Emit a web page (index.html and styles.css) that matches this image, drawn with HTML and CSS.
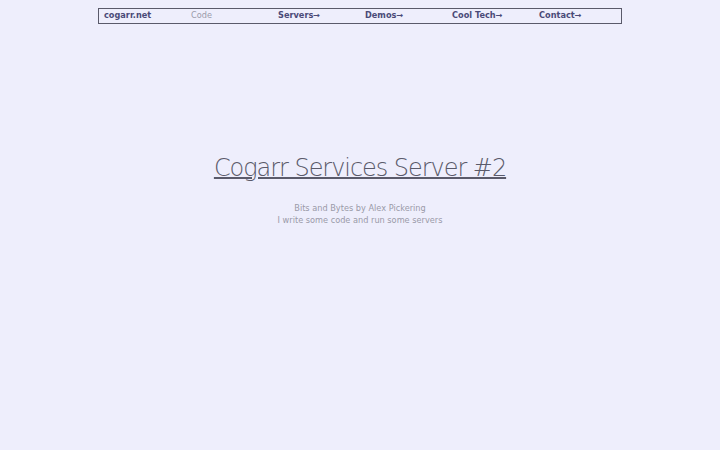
FILE: index.html
```html
<!DOCTYPE html>
<html>
<head>
<meta charset="utf-8">
<title>Cogarr Services Server #2</title>
<link rel="stylesheet" href="styles.css">
</head>
<body>
<nav class="topnav">
  <a class="nav-item nav-home" href="#">cogarr.net</a>
  <a class="nav-item nav-muted" href="#">Code</a>
  <a class="nav-item" href="#">Servers&rarr;</a>
  <a class="nav-item" href="#">Demos&rarr;</a>
  <a class="nav-item" href="#">Cool Tech&rarr;</a>
  <a class="nav-item" href="#">Contact&rarr;</a>
</nav>
<main class="hero">
  <h1 class="hero-title"><a href="#">Cogarr Services Server #2</a></h1>
  <p class="hero-sub">Bits and Bytes by Alex Pickering<br>I write some code and run some servers</p>
</main>
</body>
</html>
```
FILE: styles.css
```css
html, body {
  margin: 0;
  padding: 0;
  background: #eeeefc;
  font-family: "DejaVu Sans", sans-serif;
}

body {
  padding-top: 8px;
}

.topnav {
  width: 522px;
  margin: 0 auto;
  border: 1px solid #5a5a6a;
  display: grid;
  grid-template-columns: repeat(6, 1fr);
  height: 14px;
  align-items: start;
}

.nav-item {
  padding-left: 5px;
  font-size: 8.2px;
  font-weight: bold;
  color: #4a4a78;
  text-decoration: none;
  line-height: 12px;
}

.nav-muted {
  font-weight: normal;
  color: #9a9aaa;
}

.hero {
  text-align: center;
  padding-top: 128px;
}

.hero-title {
  margin: 0;
  font-weight: 200;
  font-size: 24px;
  letter-spacing: -1.05px;
  line-height: 32px;
}

.hero-title a {
  color: #5a5a6a;
  text-decoration: underline;
  text-decoration-thickness: 2px;
}

.hero-sub {
  margin: 18px 0 0;
  font-size: 8.2px;
  line-height: 12px;
  color: #9a9aa8;
}
```
